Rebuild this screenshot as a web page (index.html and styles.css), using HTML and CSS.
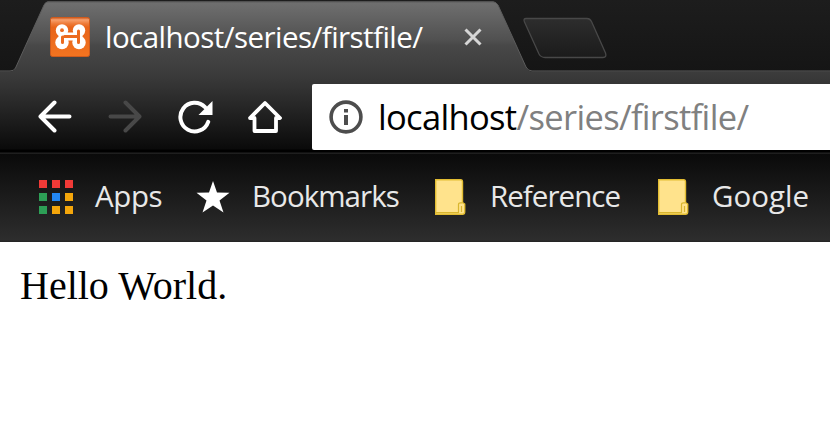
FILE: index.html
```html
<!DOCTYPE html>
<html lang="en">
<head>
<meta charset="utf-8">
<title>localhost/series/firstfile/</title>
<link rel="stylesheet" href="styles.css">
</head>
<body>
<header class="tabstrip">
  <svg class="tab-shapes" width="830" height="72" viewBox="0 0 830 72" aria-hidden="true">
    <defs>
      <linearGradient id="tab" x1="0" y1="0" x2="0" y2="1"><stop offset="0" stop-color="#707070"/><stop offset=".55" stop-color="#505050"/><stop offset=".62" stop-color="#484848"/><stop offset="1" stop-color="#3c3c3c"/></linearGradient>
      <linearGradient id="newtab" x1="0" y1="0" x2="0" y2="1"><stop offset="0" stop-color="#2d2d2d"/><stop offset="1" stop-color="#1b1b1b"/></linearGradient>
    </defs>
    <path d="M0 71.500H10Q14 71.500 15.500 68L44 5Q45.500 1.500 48 1.500H493Q496 1.500 498 5L526 67Q528 71.500 532 71.500H830V72H0Z" fill="url(#tab)"/>
    <path d="M0 71H10Q14 71 15.500 68L44 5Q45.500 2 48 2H493Q496 2 498 5L526 67Q528 71 532 71H830" fill="none" stroke="#5c5c5c"/>
    <path d="M526 18.500H587Q590 18.500 591.500 21.500L605.500 53Q607 57.500 603 57.500H545Q541 57.500 539 54L524.500 22Q523 18.500 526 18.500Z" fill="url(#newtab)" stroke="#484848" stroke-width="1.300"/>
  </svg>
  <div class="tab">
    <svg class="favicon" width="40" height="40" viewBox="0 0 40 40" aria-hidden="true">
      <defs><linearGradient id="orange" x1="0" y1="0" x2="0" y2="1"><stop offset="0" stop-color="#c9541b"/><stop offset=".06" stop-color="#f7a06d"/><stop offset=".16" stop-color="#ee7a38"/><stop offset=".25" stop-color="#e8651b"/><stop offset="1" stop-color="#f37420"/></linearGradient></defs>
      <rect x=".5" y=".5" width="39" height="39" rx="2" fill="url(#orange)" stroke="#cf5b1c"/>
      <g fill="#fff"><circle cx="12" cy="13.500" r="6.200"/><circle cx="29" cy="13.500" r="6.200"/><circle cx="12" cy="25.500" r="6.700"/><circle cx="29" cy="25.500" r="6.700"/><path d="M8.500 15.500H32.500V23.500H8.500Z"/></g>
      <path d="M12.500 20V25.500M28.500 14V25.500M14.500 19.500H28.500" fill="none" stroke="#ec6b20" stroke-width="3" stroke-linecap="round"/>
      <circle cx="12" cy="13.200" r="1.900" fill="#ec6b20"/>
    </svg>
    <span class="tab-title">localhost/series/firstfile/</span>
    <svg class="close" width="20" height="20" viewBox="0 0 20 20" aria-label="Close"><path d="M2.500 2.500L17.500 17.500M17.500 2.500L2.500 17.500" stroke="#d6d6d6" stroke-width="3"/></svg>
  </div>
</header>
<nav class="toolbar">
  <div class="controls">
    <svg width="34" height="34" viewBox="0 0 34 34" aria-label="Back"><path d="M31.500 16.500H3M16.500 2.500L2.500 16.500L16.500 30.500" class="line"/></svg>
    <svg width="34" height="34" viewBox="0 0 34 34" aria-label="Forward"><path d="M2.500 16.500H31M17.500 2.500L31.500 16.500L17.500 30.500" class="line dim"/></svg>
    <svg width="35" height="34" viewBox="0 0 35 34" aria-label="Reload"><path d="M30.200 21.800A14.300 14.300 0 1 1 27 7.200" class="line"/><path d="M34.500 1V15H20.500Z" fill="#fff"/></svg>
    <svg width="34" height="34" viewBox="0 0 34 34" aria-label="Home"><path d="M2 18L17 3L32 18H28V31H6.500V18Z" class="line home"/></svg>
  </div>
  <div class="address">
    <svg width="34" height="34" viewBox="0 0 34 34" aria-hidden="true"><circle cx="17" cy="17" r="14.900" fill="none" stroke="#4d4d4d" stroke-width="3.600"/><path d="M15 9H19V12.500H15ZM15 15H19V25H15Z" fill="#4d4d4d"/></svg>
    <span class="url"><span class="host">localhost</span><span class="path">/series/firstfile/</span></span>
  </div>
</nav>
<div class="bookmarks">
  <div class="apps-icon"><i class="red"></i><i class="red"></i><i class="red"></i><i class="green"></i><i class="blue"></i><i class="amber"></i><i class="green"></i><i class="amber"></i><i class="amber"></i></div>
  <span class="label apps">Apps</span>
  <svg class="star" width="34" height="32" viewBox="0 0 34 32" aria-hidden="true"><path d="M17 0L21 11.500L33.500 11.700L23.500 19.500L27.500 31.500L17 24.500L6.500 31.500L10.500 19.500L.500 11.700L13 11.500Z" fill="#fff"/></svg>
  <span class="label marks">Bookmarks</span>
  <svg class="folder" width="31" height="36" viewBox="0 0 31 36" aria-hidden="true"><path d="M.7.700H26Q27.500.700 27.500 2.500V23.500L29.700 25V33Q29.700 35.300 27.500 35.300H.7Z" fill="#ffe38c" stroke="#e3bd32" stroke-width="1.400"/><path d="M23.500 34V25.500Q23.500 23.800 25.500 23.800H27.500M1 33.700H23.500M26.500 27V33" fill="none" stroke="#d9b62f" stroke-width="1.200"/></svg>
  <span class="label reference">Reference</span>
  <svg class="folder" width="31" height="36" viewBox="0 0 31 36" aria-hidden="true"><path d="M.7.700H26Q27.500.700 27.500 2.500V23.500L29.700 25V33Q29.700 35.300 27.500 35.300H.7Z" fill="#ffe38c" stroke="#e3bd32" stroke-width="1.400"/><path d="M23.500 34V25.500Q23.500 23.800 25.500 23.800H27.500M1 33.700H23.500M26.500 27V33" fill="none" stroke="#d9b62f" stroke-width="1.200"/></svg>
  <span class="label google">Google</span>
</div>
<main class="page">Hello World.</main>
</body>
</html>
```
FILE: styles.css
```css
* { box-sizing: border-box; }
body {
  margin: 0;
  height: 425px;
  overflow: hidden;
  background: #fff;
  font-family: "Open Sans", "Noto Sans", sans-serif;
  white-space: nowrap;
}
svg { display: block; flex: none; }
.tabstrip {
  position: relative;
  height: 72px;
  background: linear-gradient(#1d1d1d, #151515);
}
.tab-shapes { position: absolute; left: 0; top: 0; }
.tab {
  position: relative;
  display: flex;
  align-items: center;
  height: 72px;
  padding: 2px 0 0 50px;
}
.favicon { margin-top: -1px; }
.tab-title {
  width: 358px;
  padding: 0 0 2px 15px;
  color: #fff;
  font-size: 29.5px;
  letter-spacing: -0.54px;
}
.close { margin-left: 15px; }
.toolbar {
  display: flex;
  height: 82px;
  padding-top: 12px;
  background: linear-gradient(#3c3c3c, #353535 12px, #0a0a0a 77px, #000 78px, #000 80px, #222 81px, #1b1b1b);
}
.controls {
  display: flex;
  gap: 36px;
  width: 312px;
  padding: 16px 0 0 38px;
}
.controls svg:nth-child(4) { margin-left: -1px; }
.line {
  fill: none;
  stroke: #fff;
  stroke-width: 4;
  stroke-linecap: round;
  stroke-linejoin: round;
}
.home { stroke-width: 3.8; }
.dim { stroke: #484848; }
.address {
  flex: 1;
  display: flex;
  align-items: center;
  height: 66px;
  padding-left: 17px;
  background: #fff;
  border-radius: 2px 0 0 2px;
}
.url {
  padding: 0 0 1px 15px;
  font-size: 34.5px;
  letter-spacing: -0.67px;
}
.host { color: #000; }
.path { color: #808080; }
.bookmarks {
  display: flex;
  align-items: center;
  height: 88px;
  padding: 0 0 3px 38px;
  background: linear-gradient(#0a0a0a, #2d2d2d 86px, #222);
}
.apps-icon {
  display: grid;
  grid-template-columns: repeat(3, 8px);
  gap: 5px;
  width: 34px;
  padding-left: 1px;
}
.apps-icon i { height: 8px; }
.red { background: #f03a37; }
.green { background: #2d9f56; }
.blue { background: #2387f2; }
.amber { background: #f4a60b; }
.label {
  padding-bottom: 2px;
  color: #e8e8e8;
  font-size: 29.5px;
  letter-spacing: -0.4px;
}
.apps { width: 101px; padding-left: 23px; }
.star { margin-left: 23px; }
.marks { width: 205px; padding-left: 22px; letter-spacing: -0.95px; }
.reference { width: 192px; padding-left: 24px; letter-spacing: -0.95px; }
.google { padding-left: 23px; letter-spacing: 0; }
.page {
  padding: 21px 0 0 20px;
  font: 40px/46px "Liberation Serif", serif;
  color: #000;
}
```
